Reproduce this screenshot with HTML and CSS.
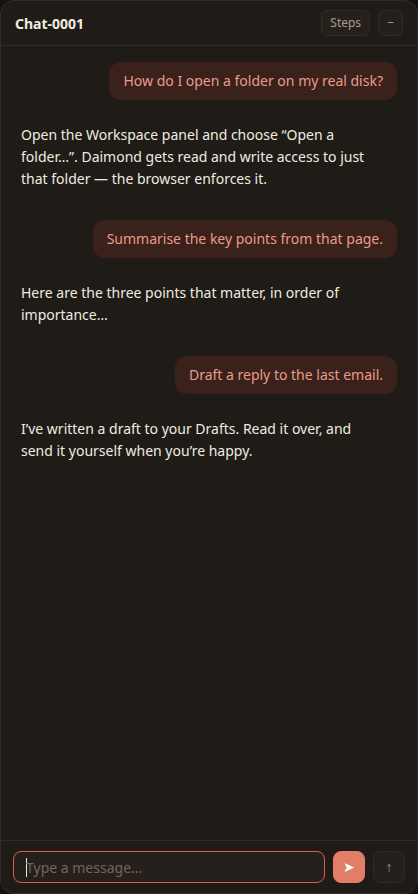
FILE: index.html
```
<!DOCTYPE html>
<html lang="en">

<head>
    <meta charset="UTF-8">
    <meta name="viewport" content="width=device-width, initial-scale=1">
    <title>Chat-0001</title>
    <link rel="stylesheet" href="styles.css">
</head>

<body>
    <main class="chat">
        <header class="chat-head">
            <h1 class="chat-title">Chat-0001</h1>
            <button type="button" class="head-btn">Steps</button>
            <button type="button" class="head-btn">−</button>
        </header>

        <div class="messages">
            <p class="msg user">How do I open a folder on my real disk?</p>
            <p class="msg bot">Open the Workspace panel and choose “Open a folder…”. Daimond gets read and write access to just that folder — the browser enforces it.</p>
            <p class="msg user">Summarise the key points from that page.</p>
            <p class="msg bot">Here are the three points that matter, in order of importance…</p>
            <p class="msg user">Draft a reply to the last email.</p>
            <p class="msg bot">I’ve written a draft to your Drafts. Read it over, and send it yourself when you’re happy.</p>
        </div>

        <form class="composer">
            <input type="text" class="composer-input" placeholder="Type a message…" aria-label="Message" autocomplete="off" autofocus>
            <button type="submit" class="round-btn send" aria-label="Send">➤</button>
            <button type="button" class="round-btn" aria-label="Scroll up">↑</button>
        </form>
    </main>
</body>

</html>
```

FILE: styles.css
```
* {
    box-sizing: border-box;
    margin: 0;
    padding: 0;
}

body {
    background: #14110f;
    color: #f0ebe0;
    font-family: "Noto Sans", sans-serif;
    font-size: 14px;
    line-height: 22px;
}

button,
input {
    font: inherit;
}

.chat {
    display: flex;
    flex-direction: column;
    height: 100vh;
    background: #1f1b16;
    border: 1px solid #332b26;
    border-radius: 14px;
    overflow: hidden;
}

/* header */
.chat-head {
    display: flex;
    align-items: center;
    gap: 8px;
    padding: 9px 14px;
    border-bottom: 1px solid #332b26;
}

.chat-title {
    flex: 1;
    font-size: 14px;
    font-weight: 700;
    line-height: 23px;
}

.head-btn {
    height: 26px;
    padding: 0 8px;
    background: #26201c;
    border: 1px solid #332b26;
    border-radius: 6px;
    color: #a89c8c;
    font-size: 12px;
    line-height: 16px;
    cursor: pointer;
}

/* messages */
.messages {
    flex: 1;
    display: flex;
    flex-direction: column;
    align-items: flex-start;
    padding: 16px 20px;
    overflow-y: auto;
}

.msg {
    max-width: 92%;
}

.user {
    align-self: flex-end;
    margin-bottom: 16px;
    padding: 8px 14px;
    background: #3b211c;
    border-radius: 12px;
    color: #e89b88;
}

.bot {
    margin-bottom: 22px;
    padding: 8px 0;
}

/* composer */
.composer {
    display: flex;
    gap: 8px;
    padding: 10px 12px;
    border-top: 1px solid #332b26;
}

.composer-input {
    flex: 1;
    min-width: 0;
    height: 32px;
    padding: 0 12px;
    background: #26201c;
    border: 1px solid #332b26;
    border-radius: 8px;
    color: #f0ebe0;
    outline: none;
}

.composer-input:focus {
    border-color: #d95f4b;
}

/* steady caret while the box is empty */
.composer-input:focus:placeholder-shown {
    background: linear-gradient(#f0ebe0, #f0ebe0) 12px center / 1px 19px no-repeat #26201c;
    caret-color: transparent;
}

.composer-input::placeholder {
    color: #70665a;
}

.round-btn {
    width: 32px;
    height: 32px;
    background: #26201c;
    border: 1px solid #332b26;
    border-radius: 8px;
    color: #a89c8c;
    font-family: "Liberation Sans", sans-serif;
    font-size: 14px;
    cursor: pointer;
}

.send {
    background: #e27d69;
    border-color: #e27d69;
    color: #fff;
}
```
